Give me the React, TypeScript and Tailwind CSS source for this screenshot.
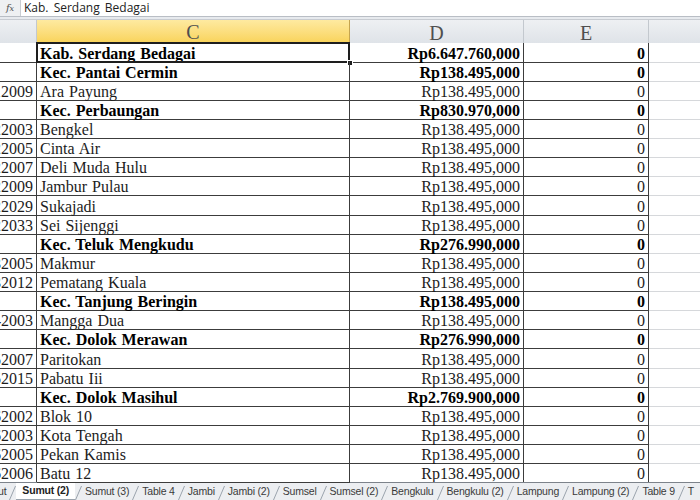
import React from 'react';

type Row = { b: string; c: string; d: string; e: string; bold?: boolean; tall?: boolean };

const rows: Row[] = [
  { b: '', c: 'Kab. Serdang Bedagai', d: 'Rp6.647.760,000', e: '0', bold: true },
  { b: '', c: 'Kec. Pantai Cermin', d: 'Rp138.495,000', e: '0', bold: true },
  { b: '1218012009', c: 'Ara Payung', d: 'Rp138.495,000', e: '0' },
  { b: '', c: 'Kec. Perbaungan', d: 'Rp830.970,000', e: '0', bold: true },
  { b: '1218022003', c: 'Bengkel', d: 'Rp138.495,000', e: '0' },
  { b: '1218022005', c: 'Cinta Air', d: 'Rp138.495,000', e: '0' },
  { b: '1218022007', c: 'Deli Muda Hulu', d: 'Rp138.495,000', e: '0' },
  { b: '1218022009', c: 'Jambur Pulau', d: 'Rp138.495,000', e: '0', tall: true },
  { b: '1218022029', c: 'Sukajadi', d: 'Rp138.495,000', e: '0' },
  { b: '1218022033', c: 'Sei Sijenggi', d: 'Rp138.495,000', e: '0' },
  { b: '', c: 'Kec. Teluk Mengkudu', d: 'Rp276.990,000', e: '0', bold: true },
  { b: '1218032005', c: 'Makmur', d: 'Rp138.495,000', e: '0' },
  { b: '1218032012', c: 'Pematang Kuala', d: 'Rp138.495,000', e: '0' },
  { b: '', c: 'Kec. Tanjung Beringin', d: 'Rp138.495,000', e: '0', bold: true },
  { b: '1218042003', c: 'Mangga Dua', d: 'Rp138.495,000', e: '0' },
  { b: '', c: 'Kec. Dolok Merawan', d: 'Rp276.990,000', e: '0', bold: true, tall: true },
  { b: '1218052007', c: 'Paritokan', d: 'Rp138.495,000', e: '0' },
  { b: '1218052015', c: 'Pabatu Iii', d: 'Rp138.495,000', e: '0' },
  { b: '', c: 'Kec. Dolok Masihul', d: 'Rp2.769.900,000', e: '0', bold: true },
  { b: '1218062002', c: 'Blok 10', d: 'Rp138.495,000', e: '0' },
  { b: '1218062003', c: 'Kota Tengah', d: 'Rp138.495,000', e: '0' },
  { b: '1218062005', c: 'Pekan Kamis', d: 'Rp138.495,000', e: '0' },
  { b: '1218062006', c: 'Batu 12', d: 'Rp138.495,000', e: '0' },
];

const tabs = [
  'ut',
  'Sumut (2)',
  'Sumut (3)',
  'Table 4',
  'Jambi',
  'Jambi (2)',
  'Sumsel',
  'Sumsel (2)',
  'Bengkulu',
  'Bengkulu (2)',
  'Lampung',
  'Lampung (2)',
  'Table 9',
  'T',
];

const cols = 'grid grid-cols-[37px_313px_174px_125px_1fr]';

function Slant() {
  return (
    <svg width="7" height="18" viewBox="0 0 7 18" className="shrink-0">
      <line x1="0.5" y1="17" x2="6.5" y2="3" stroke="#9aa3ad" strokeWidth="1" />
    </svg>
  );
}

export default function App() {
  return (
    <div className="w-[700px] h-[500px] overflow-hidden bg-[#e7eaee] flex flex-col font-['Liberation_Serif',serif] text-[#111]">
      {/* formula bar */}
      <div className="h-[17px] flex bg-white border-b border-[#b9bec5] shrink-0">
        <div className="w-[21px] bg-[#eef0f2] border-r border-[#c9cdd2] flex items-center justify-center">
          <span className="text-[10px] italic text-[#555] font-['DejaVu_Serif',serif] leading-none">
            f<span className="text-[8px]">x</span>
          </span>
        </div>
        <div className="pl-[3px] flex items-center text-[12px] leading-none font-['Open_Sans','Liberation_Sans',sans-serif] text-[#222] [word-spacing:2px]">
          Kab. Serdang Bedagai
        </div>
      </div>
      <div className="h-[2px] shrink-0" />

      {/* column headers */}
      <div className={`${cols} h-[24px] shrink-0 border-t border-[#c8ccd2] border-b border-b-[#9ea5ae] text-[20px] leading-none text-[#4f4f4f]`}>
        <div className="bg-gradient-to-b from-[#eef0f3] to-[#dfe3e8] border-r border-[#c3c8ce]" />
        <div className="bg-gradient-to-b from-[#feeaa0] to-[#f9d45c] border-r border-[#c5a44e] border-b border-b-[#b48d36] flex items-center justify-center pt-[2px]">
          C
        </div>
        <div className="bg-gradient-to-b from-[#eef0f3] to-[#dfe3e8] border-r border-[#c3c8ce] flex items-center justify-center pt-[2px]">
          D
        </div>
        <div className="bg-gradient-to-b from-[#eef0f3] to-[#dfe3e8] border-r border-[#c3c8ce] flex items-center justify-center pt-[2px]">
          E
        </div>
        <div className="bg-gradient-to-b from-[#eef0f3] to-[#dfe3e8]" />
      </div>

      {/* rows */}
      <div className="bg-white shrink-0">
        {rows.map((r, i) => (
          <div
            key={i}
            className={`${cols} ${r.tall ? 'h-[20px]' : 'h-[19px]'} text-[16px] leading-none ${r.bold ? 'font-bold text-black' : 'text-[#1c1c1c]'}`}
          >
            <div className="border-r border-b border-[#3c3c3c] overflow-hidden flex items-center justify-end pr-[3px] pt-[3px] font-normal text-[#1c1c1c] whitespace-nowrap">
              {r.b}
            </div>
            <div className="relative border-r border-b border-[#3c3c3c] flex items-center pl-[3px] pt-[3px] whitespace-nowrap [word-spacing:1px]">
              {r.c}
              {i === 0 && (
                <>
                  <div className="absolute -left-[1px] -top-[1px] -right-[1px] -bottom-[1px] border-2 border-[#1e1e1e]" />
                  <div className="absolute -right-[4px] -bottom-[4px] w-[6px] h-[6px] bg-[#1e1e1e] border border-white" />
                </>
              )}
            </div>
            <div className="border-r border-b border-[#3c3c3c] flex items-center justify-end pr-[3px] pt-[3px] whitespace-nowrap">
              {r.d}
            </div>
            <div className="border-r border-b border-[#3c3c3c] flex items-center justify-end pr-[3px] pt-[3px]">
              {r.e}
            </div>
            <div className="border-b border-[#d6d8db]" />
          </div>
        ))}
      </div>

      {/* sheet tabs */}
      <div className="flex-1 flex items-start bg-[#eceef1] border-t border-[#7d838b] font-['Liberation_Sans',sans-serif] text-[10.5px] tracking-[-0.2px] text-[#3a3a3a] overflow-hidden">
        {tabs.map((t, i) => (
          <div key={t} className="flex items-stretch h-[17px] shrink-0">
            {i === 1 ? (
              <div className="flex items-center bg-white font-bold text-[#222] px-[6px] h-[17px] border-b border-[#9aa3ad]">
                {t}
              </div>
            ) : (
              <div className={`flex items-center ${i === 0 ? 'pr-[3px] -ml-[2px]' : 'px-[3px]'}`}>{t}</div>
            )}
            {i < tabs.length - 1 && <Slant />}
          </div>
        ))}
      </div>
    </div>
  );
}
